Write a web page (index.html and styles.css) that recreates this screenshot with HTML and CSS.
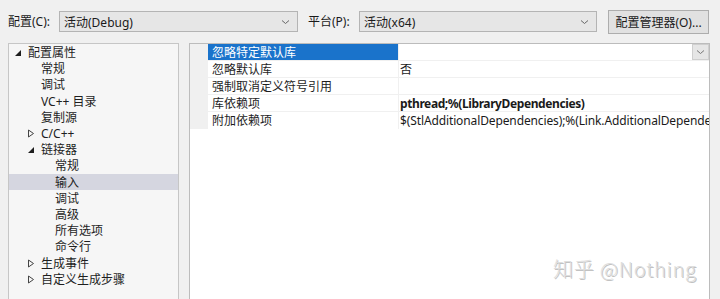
FILE: index.html
```html
<!DOCTYPE html>
<html>
<head>
<meta charset="utf-8">
<link rel="stylesheet" href="styles.css">
</head>
<body>
<div class="page">
  <div class="top">
    <span class="label">配置(C):</span>
    <div class="combo combo-config"><span>活动(Debug)</span><svg class="chev" width="9" height="6" viewBox="0 0 9 6"><path d="M1 1.5 L4.5 4.5 L8 1.5" fill="none" stroke="#666" stroke-width="1"/></svg></div>
    <span class="label label-plat">平台(P):</span>
    <div class="combo combo-plat"><span>活动(x64)</span><svg class="chev" width="9" height="6" viewBox="0 0 9 6"><path d="M1 1.5 L4.5 4.5 L8 1.5" fill="none" stroke="#666" stroke-width="1"/></svg></div>
    <button class="btn">配置管理器(O)...</button>
  </div>
  <div class="main">
    <div class="tree">
      <div class="node l0"><svg class="tri" width="8" height="8" viewBox="0 0 8 8"><path d="M7 1 L7 7 L1 7 Z" fill="#1e1e1e"/></svg><span>配置属性</span></div>
      <div class="node l1">常规</div>
      <div class="node l1">调试</div>
      <div class="node l1">VC++ 目录</div>
      <div class="node l1">复制源</div>
      <div class="node l1t"><svg class="tri" width="8" height="9" viewBox="0 0 8 9"><path d="M1.5 1 L6.5 4.5 L1.5 8 Z" fill="none" stroke="#444" stroke-width="1"/></svg><span>C/C++</span></div>
      <div class="node l1t"><svg class="tri" width="8" height="8" viewBox="0 0 8 8"><path d="M7 1 L7 7 L1 7 Z" fill="#1e1e1e"/></svg><span>链接器</span></div>
      <div class="node l2">常规</div>
      <div class="node l2 sel">输入</div>
      <div class="node l2">调试</div>
      <div class="node l2">高级</div>
      <div class="node l2">所有选项</div>
      <div class="node l2">命令行</div>
      <div class="node l1t"><svg class="tri" width="8" height="9" viewBox="0 0 8 9"><path d="M1.5 1 L6.5 4.5 L1.5 8 Z" fill="none" stroke="#444" stroke-width="1"/></svg><span>生成事件</span></div>
      <div class="node l1t"><svg class="tri" width="8" height="9" viewBox="0 0 8 9"><path d="M1.5 1 L6.5 4.5 L1.5 8 Z" fill="none" stroke="#444" stroke-width="1"/></svg><span>自定义生成步骤</span></div>
    </div>
    <div class="grid">
      <div class="rows">
        <div class="row">
          <div class="name selname">忽略特定默认库</div>
          <div class="value first"><span></span><div class="dd"><svg width="9" height="6" viewBox="0 0 9 6"><path d="M1 1.5 L4.5 4.5 L8 1.5" fill="none" stroke="#777" stroke-width="1"/></svg></div></div>
        </div>
        <div class="row">
          <div class="name">忽略默认库</div>
          <div class="value">否</div>
        </div>
        <div class="row">
          <div class="name">强制取消定义符号引用</div>
          <div class="value"></div>
        </div>
        <div class="row">
          <div class="name">库依赖项</div>
          <div class="value bold">pthread;%(LibraryDependencies)</div>
        </div>
        <div class="row">
          <div class="name">附加依赖项</div>
          <div class="value narrow">$(StlAdditionalDependencies);%(Link.AdditionalDependencies)</div>
        </div>
      </div>
    </div>
  </div>
  <div class="watermark">知乎 @Nothing</div>
</div>
</body>
</html>
```
FILE: styles.css
```css
* { box-sizing: border-box; }
html, body {
  margin: 0;
  padding: 0;
  background: #f0f0f0;
  overflow: hidden;
}
body {
  font-family: "Noto Sans", "Noto Sans CJK SC", sans-serif;
  font-size: 12px;
  color: #1a1a1a;
  width: 720px;
  height: 299px;
}
.page {
  position: relative;
  width: 720px;
  height: 299px;
  overflow: hidden;
}
.top {
  height: 43px;
  display: flex;
  align-items: center;
  padding-left: 8px;
}
.label {
  width: 51px;
  line-height: 16px;
}
.label-plat {
  width: 51px;
  margin-left: 10px;
}
.combo {
  height: 21px;
  border: 1px solid #b4b4b4;
  background: #e6e6e6;
  display: flex;
  align-items: center;
  justify-content: space-between;
  padding: 0 7px 0 4px;
}
.combo-config { width: 239px; }
.combo-plat { width: 238px; }
.btn {
  margin-left: 11px;
  width: 101px;
  height: 24px;
  border: 1px solid #adadad;
  background: #e1e1e1;
  font: inherit;
  color: #1a1a1a;
  padding: 0;
}
.main {
  display: flex;
  gap: 10px;
  padding-left: 8px;
}
.tree {
  width: 171px;
  height: 280px;
  border: 1px solid #c6c6c6;
  background: #f6f6f6;
}
.node {
  height: 16.2px;
  line-height: 16px;
  display: flex;
  align-items: center;
  color: #1e1e1e;
  padding-top: 2px;
}
.tri { flex: none; margin-top: -1px; }
.l0 { padding-left: 5px; }
.l0 .tri { margin-right: 6px; }
.l1 { padding-left: 32px; }
.l1t { padding-left: 18px; }
.l1t .tri { margin-right: 6px; }
.l2 { padding-left: 46px; }
.sel { background: #d5d6e0; }
.grid {
  width: 521px;
  height: 280px;
  border: 1px solid #bcbcbc;
  background: #ffffff;
  overflow: hidden;
}
.rows {
  background: #f0f0f0;
  padding-left: 18px;
}
.row {
  display: flex;
  height: 17px;
  border-bottom: 1px solid #f0f0f0;
  background: #fff;
}
.row:last-child { border-bottom: none; }
.name {
  width: 191px;
  flex: none;
  padding-left: 4px;
  line-height: 18px;
  border-right: 1px solid #f0f0f0;
  color: #1e1e1e;
}
.selname {
  background: #1a73cb;
  color: #fff;
}
.value {
  flex: 1;
  min-width: 0;
  padding-left: 1px;
  line-height: 18px;
  white-space: nowrap;
  overflow-x: clip;
  overflow-y: visible;
  display: flex;
  justify-content: space-between;
}
.value.first { line-height: 16px; }
.bold { font-weight: bold; letter-spacing: -0.4px; }
.narrow { letter-spacing: -0.12px; }
.dd {
  width: 17px;
  height: 16px;
  background: #e6e6e6;
  border: 1px solid #cfcfcf;
  display: flex;
  align-items: center;
  justify-content: center;
}
.watermark {
  position: absolute;
  left: 553px;
  top: 254px;
  font-family: "Noto Sans CJK SC", sans-serif;
  font-size: 20px;
  font-weight: 300;
  color: #dedede;
  text-shadow: 1px 1px 0 #c2c2c2;
  letter-spacing: 0.8px;
}
```
